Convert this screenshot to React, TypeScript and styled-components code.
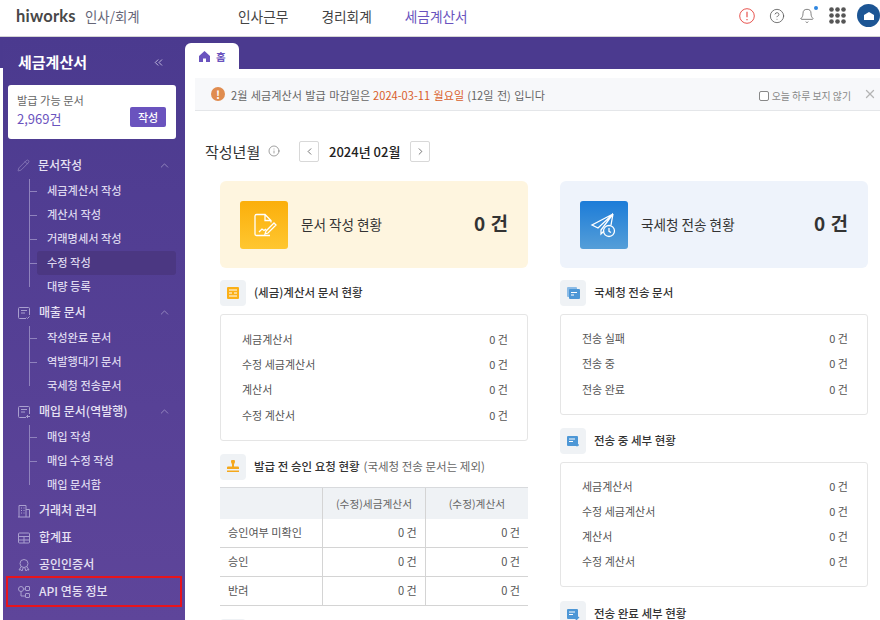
import React from 'react';
import styled, { createGlobalStyle } from 'styled-components';
import { Pencil, ChevronUp, ChevronLeft, ChevronRight, ChevronsLeft, X, Bell, CircleHelp, Info } from 'lucide-react';

const GlobalStyle = createGlobalStyle`
  html, body { margin: 0; padding: 0; background: #fff; }
  body { font-family: "Noto Sans CJK KR", "Noto Sans", sans-serif; color: #333; }
  * { box-sizing: border-box; }
`;

const Page = styled.div`
  width: 880px;
  height: 620px;
  overflow: hidden;
`;

const Header = styled.header`
  height: 37px;
  border-bottom: 1px solid #d4d4d4;
  display: flex;
  align-items: center;
  padding: 0 0 5px 16px;
`;

const Logo = styled.div`
  font-family: Lato, sans-serif;
  font-weight: 700;
  font-size: 16.5px;
  letter-spacing: 0.2px;
  color: #484848;
  width: 69px;
`;

const Product = styled.div`
  font-size: 13.4px;
  color: #667;
  width: 153px;
`;

const TopNav = styled.nav`
  display: flex;
  gap: 33px;
`;

const TopLink = styled.a<{ $active?: boolean }>`
  font-size: 13.7px;
  color: ${({ $active }) => ($active ? '#6a53be' : '#444')};
`;

const HeaderIcons = styled.div`
  margin-left: auto;
  display: flex;
  align-items: center;
  gap: 14px;
`;

const BellWrap = styled.div`
  position: relative;
  display: flex;
  &::after {
    content: '';
    position: absolute;
    top: -2px;
    right: -3px;
    width: 4px;
    height: 4px;
    border-radius: 50%;
    background: #2f86e0;
  }
`;

const Avatar = styled.div`
  width: 23px;
  height: 23px;
  margin-left: -3px;
  border-radius: 50%;
  background: #1c5594;
  display: flex;
  align-items: center;
  justify-content: center;
`;

const Body = styled.div`
  display: flex;
  height: 583px;
`;

const Edge = styled.div`
  width: 3px;
  &::before {
    content: '';
    display: block;
    height: 31px;
    background: #4b3a8f;
  }
`;

const Sidebar = styled.aside`
  width: 182px;
  background: linear-gradient(180deg, #4b3a8f 0%, #5e459a 100%);
  color: #e6e1f3;
`;

const SideTop = styled.div`
  height: 48px;
  padding: 0 20px 0 15px;
  display: flex;
  align-items: center;
  justify-content: space-between;
  color: #fff;
  font-size: 15px;
  font-weight: 700;
  svg { color: #dedaf0; margin-top: 2px; }
`;

const IssueCard = styled.div`
  margin: 0 9px 0 5px;
  height: 54px;
  background: #fff;
  border-radius: 3px;
  padding: 6px 10px 0 9px;
`;

const IssueLabel = styled.div`
  font-size: 11.2px;
  line-height: 18px;
  color: #666;
`;

const IssueRow = styled.div`
  display: flex;
  align-items: center;
  justify-content: space-between;
`;

const IssueCount = styled.div`
  font-size: 13px;
  color: #6a53be;
  font-weight: 400;
`;

const SmallButton = styled.button`
  width: 36px;
  height: 20px;
  margin-top: -3px;
  border: none;
  border-radius: 2px;
  background: #6a53be;
  color: #fff;
  font: 500 11px "Noto Sans CJK KR", sans-serif;
  padding: 0;
`;

const Menu = styled.nav`
  margin-top: 13px;
`;

const MenuHead = styled.div<{ $marked?: boolean }>`
  height: 27px;
  display: flex;
  align-items: center;
  gap: 8px;
  margin: 0 5px 0 ${({ $marked }) => ($marked ? '5px' : '0')};
  padding: 0 0 2px ${({ $marked }) => ($marked ? '9px' : '14px')};
  font-size: 12px;
  font-weight: 500;
  outline: ${({ $marked }) => ($marked ? '2px solid #e8141c' : 'none')};
  > svg { flex: none; margin-top: 2px; }
  > svg:last-child:not(:first-child) { margin-left: auto; margin-right: 9px; }
`;

const SubItem = styled.div<{ $active?: boolean; $last?: boolean }>`
  position: relative;
  height: 24px;
  margin: 0 9px 0 34px;
  padding: 0 0 2px 10px;
  display: flex;
  align-items: center;
  font-size: 11.2px;
  font-weight: 500;
  color: #dcd6ee;
  border-radius: 3px;
  background: ${({ $active }) => ($active ? '#4b3782' : 'transparent')};
  &::before {
    content: '';
    position: absolute;
    left: -8px;
    top: 0;
    height: ${({ $last }) => ($last ? '12px' : '24px')};
    width: 8px;
    background:
      linear-gradient(#8f82bd, #8f82bd) left top / 1px 100% no-repeat,
      linear-gradient(#8f82bd, #8f82bd) left 11.5px / 100% 1px no-repeat;
  }
`;

const Main = styled.main`
  flex: 1;
  min-width: 0;
`;

const TabStrip = styled.div`
  height: 32px;
  background: #4b3a8f;
  display: flex;
  align-items: flex-end;
`;

const HomeTab = styled.div`
  width: 54px;
  height: 26px;
  background: #fff;
  border-radius: 6px 6px 0 0;
  display: flex;
  align-items: center;
  gap: 5px;
  padding-left: 13px;
  color: #6a53be;
  font-size: 10.5px;
  font-weight: 700;
`;

const Notice = styled.div`
  margin: 9px 0 0 10px;
  height: 33px;
  background: #f7f8fa;
  border-bottom: 1px solid #e4e6e9;
  display: flex;
  align-items: center;
  padding: 2px 4px 0 16px;
  font-size: 11.1px;
  word-spacing: 1px;
  color: #666;
`;

const NoticeMark = styled.span`
  width: 14px;
  height: 14px;
  margin: -2px 6px 0 0;
  border-radius: 50%;
  background: #e08c4f;
  color: #fff;
  font-size: 11px;
  font-weight: 700;
  line-height: 14px;
  text-align: center;
`;

const Hot = styled.em`
  font-style: normal;
  color: #d9602c;
  margin: 0 3px;
`;

const HideToday = styled.label`
  margin-left: auto;
  display: flex;
  align-items: center;
  gap: 3px;
  font-size: 9.9px;
  word-spacing: 0;
  color: #888;
  margin-top: 1px;
`;

const Check = styled.span`
  width: 10px;
  height: 10px;
  border: 1px solid #888;
  border-radius: 2px;
  background: #fff;
`;

const CloseBtn = styled.span`
  display: flex;
  margin: -2px -1px 0 12px;
  color: #b4b4b4;
`;

const Content = styled.div`
  padding: 29px 0 0 10px;
`;

const TitleRow = styled.div`
  height: 22px;
  padding-left: 10px;
  display: flex;
  align-items: center;
`;

const PageTitle = styled.h2`
  margin: 0;
  font-size: 15px;
  font-weight: 400;
  color: #333;
`;

const InfoIcon = styled.span`
  display: flex;
  margin: 0 19px 0 8px;
  color: #555;
`;

const NavBtn = styled.button`
  width: 20px;
  height: 21px;
  padding: 0;
  border: 1px solid #d8d8d8;
  border-radius: 2px;
  background: #fff;
  color: #444;
  display: flex;
  align-items: center;
  justify-content: center;
`;

const Month = styled.div`
  width: 91px;
  text-align: center;
  font-size: 13px;
  font-weight: 500;
  color: #222;
`;

const Columns = styled.div`
  display: grid;
  grid-template-columns: 308px 308px;
  gap: 32px;
  padding: 19px 0 0 25px;
`;

const Column = styled.div``;

const StatCard = styled.div<{ $bg: string }>`
  height: 87px;
  border-radius: 6px;
  background: ${({ $bg }) => $bg};
  display: flex;
  align-items: center;
  padding: 0 20px;
`;

const StatIcon = styled.div<{ $from: string; $to: string }>`
  width: 48px;
  height: 48px;
  border-radius: 3px;
  background: linear-gradient(180deg, ${({ $from }) => $from}, ${({ $to }) => $to});
  display: flex;
  align-items: center;
  justify-content: center;
  margin-right: 13px;
`;

const StatTitle = styled.div`
  font-size: 13.6px;
  font-weight: 400;
  color: #333;
  padding-bottom: 2px;
`;

const StatCount = styled.div`
  margin-left: auto;
  font-size: 19px;
  font-weight: 700;
  color: #333;
  word-spacing: 1px;
  padding-bottom: 5px;
`;

const SectionHead = styled.div<{ $top: number }>`
  display: flex;
  align-items: center;
  gap: 8px;
  margin-top: ${({ $top }) => $top}px;
  height: 26px;
`;

const SectionIcon = styled.div`
  width: 26px;
  height: 26px;
  border-radius: 4px;
  background: #eff2f5;
  display: flex;
  align-items: center;
  justify-content: center;
`;

const SectionTitle = styled.div`
  font-size: 11.5px;
  font-weight: 500;
  color: #333;
  padding-bottom: 2px;
  white-space: nowrap;
`;

const SectionNote = styled.span`
  font-weight: 400;
  color: #666;
  margin-left: 4px;
`;

const Panel = styled.div<{ $pad: number }>`
  margin-top: 8px;
  border: 1px solid #e5e5e5;
  border-radius: 3px;
  padding: ${({ $pad }) => $pad}px 19px ${({ $pad }) => $pad}px 21px;
`;

const PanelRow = styled.div`
  height: 25.3px;
  padding-bottom: 2px;
  display: flex;
  align-items: center;
  justify-content: space-between;
  font-size: 11px;
  color: #555;
`;

const Table = styled.table`
  width: 308px;
  margin-top: 7px;
  border-collapse: collapse;
  table-layout: fixed;
  font-size: 11.1px;
  color: #555;
  th {
    height: 31px;
    background: #eff2f5;
    font-size: 10.7px;
    font-weight: 400;
    color: #666;
    border-top: 1px solid #d8dadd;
  }
  td {
    height: 29px;
    text-align: right;
    padding: 0 8px 2px;
    border-bottom: 1px solid #d4d4d4;
  }
  td:first-child { text-align: left; }
  th + th, td + td { border-left: 1px solid #d4d4d4; }
`;

const iconProps = { width: 14, height: 14, fill: 'none', stroke: '#a99fcf', strokeWidth: 1 };

const DocIcon = ({ arrow }: { arrow?: boolean }) => (
  <svg {...iconProps} viewBox="0 0 14 14">
    <path d="M9 12.5H2.5a1 1 0 0 1-1-1v-9a1 1 0 0 1 1-1h9a1 1 0 0 1 1 1V9" />
    <path d="M4 4.5h6M4 7h4" />
    {arrow ? <path d="M13 11.5H9.5m1.5-1.5-1.5 1.5 1.5 1.5" /> : <path d="m9.5 11.5 1 1 2-2" />}
  </svg>
);

const BuildingIcon = () => (
  <svg {...iconProps} viewBox="0 0 14 14">
    <path d="M2 13V1.5h7V13M9 5.5h3.5V13M1 13h12" />
    <path d="M4 4h1M6.5 4h1M4 6.5h1M6.5 6.5h1M4 9h1M6.5 9h1" />
  </svg>
);

const SumIcon = () => (
  <svg {...iconProps} viewBox="0 0 14 14">
    <rect x="1.5" y="2" width="11" height="10" rx="1" />
    <path d="M1.5 5.5h11M1.5 9h11M7 5.5V12" />
  </svg>
);

const CertIcon = () => (
  <svg {...iconProps} viewBox="0 0 14 14">
    <circle cx="7" cy="5.5" r="4" />
    <path d="M4.2 8.5 2 12l2-.3L5 13l1.3-3.5M9.8 8.5 12 12l-2-.3L9 13l-1.3-3.5" />
  </svg>
);

const ApiIcon = () => (
  <svg {...iconProps} viewBox="0 0 14 14">
    <circle cx="4" cy="4" r="2.5" />
    <rect x="8.5" y="1.5" width="4" height="4" rx=".5" />
    <rect x="8.5" y="8.5" width="4" height="4" rx=".5" />
    <path d="M4 6.5V11h4.500M6.500 4h2" />
  </svg>
);

const groups = [
  {
    icon: <Pencil width={13} height={13} color="#a99fcf" strokeWidth={1} />,
    title: '문서작성',
    items: ['세금계산서 작성', '계산서 작성', '거래명세서 작성', '수정 작성', '대량 등록'],
  },
  { icon: <DocIcon />, title: '매출 문서', items: ['작성완료 문서', '역발행대기 문서', '국세청 전송문서'] },
  { icon: <DocIcon arrow />, title: '매입 문서(역발행)', items: ['매입 작성', '매입 수정 작성', '매입 문서함'] },
];

const DOC_ROWS = ['세금계산서', '수정 세금계산서', '계산서', '수정 계산서'];

const Rows = ({ labels, pad }: { labels: string[]; pad: number }) => (
  <Panel $pad={pad}>
    {labels.map((label) => (
      <PanelRow key={label}>
        <span>{label}</span>
        <span>0 건</span>
      </PanelRow>
    ))}
  </Panel>
);

const BlueDocIcon = ({ check }: { check?: boolean }) => (
  <svg width="14" height="14" viewBox="0 0 14 14">
    <rect x="1" y="2" width="11" height="10" rx="1" fill="#4d97d6" />
    <path d="M3 5h6M3 7.5h4" stroke="#fff" strokeWidth="1" />
    {check
      ? <path d="m9 11 1.5 1.5L13 10" stroke="#4d97d6" fill="none" strokeWidth="1.2" />
      : <path d="M8.5 11h4m-1.5-1.5 1.5 1.5-1.5 1.5" stroke="#4d97d6" fill="none" strokeWidth="1" />}
  </svg>
);

const App: React.FC = () => (
  <Page>
    <GlobalStyle />
    <Header>
      <Logo>hiworks</Logo>
      <Product>인사/회계</Product>
      <TopNav>
        <TopLink>인사근무</TopLink>
        <TopLink>경리회계</TopLink>
        <TopLink $active>세금계산서</TopLink>
      </TopNav>
      <HeaderIcons>
        <svg width="16" height="16" viewBox="0 0 16 16" fill="none">
          <circle cx="8" cy="8" r="7.3" stroke="#e8544f" strokeWidth="1" />
          <path d="M8 3.8v5.4M8 11v1.2" stroke="#e8544f" strokeWidth="1.2" />
        </svg>
        <CircleHelp size={16} color="#555" strokeWidth={1.2} />
        <BellWrap>
          <Bell size={16} color="#555" strokeWidth={1.1} />
        </BellWrap>
        <svg width="17" height="17" viewBox="0 0 17 17" fill="#555">
          {[0, 1, 2].flatMap((r) =>
            [0, 1, 2].map((c) => <circle key={`${r}${c}`} cx={2.5 + c * 6} cy={2.5 + r * 6} r="2.3" />),
          )}
        </svg>
        <Avatar>
          <svg width="12" height="10" viewBox="0 0 12 10">
            <path d="M1 4 6 1l5 3v5H1z" fill="#fff" />
          </svg>
        </Avatar>
      </HeaderIcons>
    </Header>
    <Body>
      <Edge />
      <Sidebar>
        <SideTop>
          세금계산서
          <ChevronsLeft size={13} strokeWidth={1.4} />
        </SideTop>
        <IssueCard>
          <IssueLabel>발급 가능 문서</IssueLabel>
          <IssueRow>
            <IssueCount>2,969건</IssueCount>
            <SmallButton>작성</SmallButton>
          </IssueRow>
        </IssueCard>
        <Menu>
          {groups.map((group) => (
            <React.Fragment key={group.title}>
              <MenuHead>
                {group.icon}
                {group.title}
                <ChevronUp size={13} color="#c7c0e0" strokeWidth={1} />
              </MenuHead>
              {group.items.map((item, i) => (
                <SubItem key={item} $active={item === '수정 작성'} $last={i === group.items.length - 1}>
                  {item}
                </SubItem>
              ))}
            </React.Fragment>
          ))}
          <MenuHead><BuildingIcon />거래처 관리</MenuHead>
          <MenuHead><SumIcon />합계표</MenuHead>
          <MenuHead><CertIcon />공인인증서</MenuHead>
          <MenuHead $marked><ApiIcon />API 연동 정보</MenuHead>
        </Menu>
      </Sidebar>
      <Main>
        <TabStrip>
          <HomeTab>
            <svg width="13" height="13" viewBox="0 0 13 13" fill="#6a53be">
              <path d="M6.5 1 12 6v6H8V8.5H5V12H1V6z" />
            </svg>
            홈
          </HomeTab>
        </TabStrip>
        <Notice>
          <NoticeMark>!</NoticeMark>
          2월 세금계산서 발급 마감일은<Hot>2024-03-11 월요일</Hot>(12일 전) 입니다
          <HideToday><Check />오늘 하루 보지 않기</HideToday>
          <CloseBtn><X size={14} strokeWidth={2.2} /></CloseBtn>
        </Notice>
        <Content>
          <TitleRow>
            <PageTitle>작성년월</PageTitle>
            <InfoIcon><Info size={12} strokeWidth={1.1} /></InfoIcon>
            <NavBtn><ChevronLeft size={11} strokeWidth={1.6} /></NavBtn>
            <Month>2024년 02월</Month>
            <NavBtn><ChevronRight size={11} strokeWidth={1.6} /></NavBtn>
          </TitleRow>
          <Columns>
            <Column>
              <StatCard $bg="#fef5df">
                <StatIcon $from="#fbaf0b" $to="#ffc730">
                  <svg width="28" height="28" viewBox="0 0 28 28" fill="none" stroke="#fff" strokeWidth="1.3">
                    <path d="M5 20V5a1.5 1.5 0 0 1 1.5-1.5H15l6 6v2M15 3.5v6h6M5 20v3a1.5 1.5 0 0 0 1.5 1.5H20" />
                    <path d="m9 21 3-3 2 1.5 2-1.5M16 20l8-8 2 2-8 8-3 1z" />
                  </svg>
                </StatIcon>
                <StatTitle>문서 작성 현황</StatTitle>
                <StatCount>0 건</StatCount>
              </StatCard>
              <SectionHead $top={12}>
                <SectionIcon>
                  <svg width="12" height="12" viewBox="0 0 12 12">
                    <rect width="12" height="12" rx="1" fill="#fbb017" />
                    <path d="M2 3h8M2 6h3M7 6h3M2 9h8" stroke="#fff" strokeWidth="1" />
                  </svg>
                </SectionIcon>
                <SectionTitle>(세금)계산서 문서 현황</SectionTitle>
              </SectionHead>
              <Rows labels={DOC_ROWS} pad={12} />
              <SectionHead $top={13}>
                <SectionIcon>
                  <svg width="14" height="14" viewBox="0 0 14 14" fill="#f5a81c">
                    <path d="M5 1.5a2 2 0 0 1 4 0c0 1.5-1 2-1 3.5v1.5h4a1 1 0 0 1 1 1V9H1V7.5a1 1 0 0 1 1-1h4V5c0-1.5-1-2-1-3.5zM1 10.5h12V12H1z" />
                  </svg>
                </SectionIcon>
                <SectionTitle>
                  발급 전 승인 요청 현황<SectionNote>(국세청 전송 문서는 제외)</SectionNote>
                </SectionTitle>
              </SectionHead>
              <Table>
                <thead>
                  <tr><th /><th>(수정)세금계산서</th><th>(수정)계산서</th></tr>
                </thead>
                <tbody>
                  {['승인여부 미확인', '승인', '반려'].map((label) => (
                    <tr key={label}><td>{label}</td><td>0 건</td><td>0 건</td></tr>
                  ))}
                </tbody>
              </Table>
              <SectionHead $top={13}><SectionIcon /></SectionHead>
            </Column>
            <Column>
              <StatCard $bg="#eef3fb">
                <StatIcon $from="#1c7cd8" $to="#559ed8">
                  <svg width="30" height="30" viewBox="0 0 30 30" fill="none" stroke="#fff" strokeWidth="1.3">
                    <path d="M24 4 3 15l6 3 15-14-12 16v4l3-3M24 4l-2 11" />
                    <circle cx="20" cy="21" r="5.5" />
                    <path d="M20 18v3.3l2 1.2" />
                  </svg>
                </StatIcon>
                <StatTitle>국세청 전송 현황</StatTitle>
                <StatCount>0 건</StatCount>
              </StatCard>
              <SectionHead $top={12}>
                <SectionIcon>
                  <svg width="14" height="14" viewBox="0 0 14 14">
                    <rect x="1" y="1" width="10" height="10" rx="1" fill="#8dbce6" />
                    <rect x="3" y="3" width="11" height="10" rx="1" fill="#4d97d6" />
                    <path d="M5 6.5h6M5 9h3" stroke="#fff" strokeWidth="1" />
                  </svg>
                </SectionIcon>
                <SectionTitle>국세청 전송 문서</SectionTitle>
              </SectionHead>
              <Rows labels={['전송 실패', '전송 중', '전송 완료']} pad={11.5} />
              <SectionHead $top={13}>
                <SectionIcon><BlueDocIcon /></SectionIcon>
                <SectionTitle>전송 중 세부 현황</SectionTitle>
              </SectionHead>
              <Rows labels={DOC_ROWS} pad={11} />
              <SectionHead $top={14}>
                <SectionIcon><BlueDocIcon check /></SectionIcon>
                <SectionTitle>전송 완료 세부 현황</SectionTitle>
              </SectionHead>
            </Column>
          </Columns>
        </Content>
      </Main>
    </Body>
  </Page>
);

export default App;
